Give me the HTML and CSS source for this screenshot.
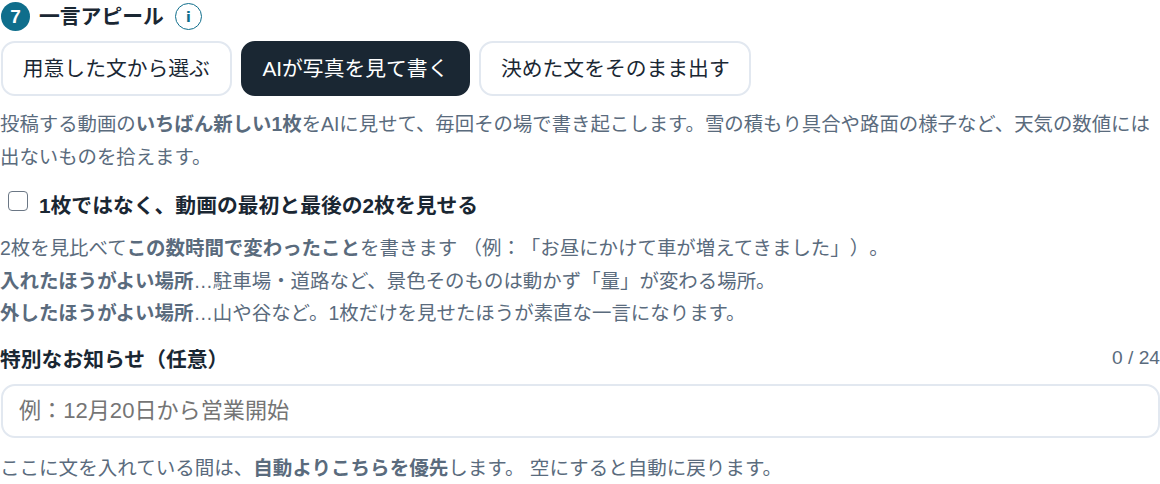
FILE: index.html
```html
<!DOCTYPE html>
<html lang="ja">
<head>
  <meta charset="UTF-8">
  <title>一言アピール</title>
  <link rel="stylesheet" href="styles.css">
</head>
<body>
  <section class="panel">
    <div class="heading">
      <span class="step">7</span>
      <h2>一言アピール</h2>
      <span class="info">i</span>
    </div>
    <div class="tabs">
      <button class="tab">用意した文から選ぶ</button>
      <button class="tab active">AIが写真を見て書く</button>
      <button class="tab">決めた文をそのまま出す</button>
    </div>
    <p class="note lead">投稿する動画の<b>いちばん新しい1枚</b>をAIに見せて、毎回その場で書き起こします。雪の積もり具合や路面の様子など、天気の数値には出ないものを拾えます。</p>
    <label class="check">
      <input type="checkbox">
      <span>1枚ではなく、動画の最初と最後の2枚を見せる</span>
    </label>
    <p class="note detail">2枚を見比べて<b>この数時間で変わったこと</b>を書きます （例：「お昼にかけて車が増えてきました」）。<br>
    <b>入れたほうがよい場所</b>…駐車場・道路など、景色そのものは動かず「量」が変わる場所。<br>
    <b>外したほうがよい場所</b>…山や谷など。1枚だけを見せたほうが素直な一言になります。</p>
    <div class="field-head">
      <label class="field-label" for="special">特別なお知らせ（任意）</label>
      <span class="count">0 / 24</span>
    </div>
    <input class="text-input" id="special" type="text" placeholder="例：12月20日から営業開始">
    <p class="note hint">ここに文を入れている間は、<b>自動よりこちらを優先</b>します。 空にすると自動に戻ります。</p>
  </section>
</body>
</html>
```
FILE: styles.css
```css
* {
  box-sizing: border-box;
  margin: 0;
  padding: 0;
}

body {
  background: #fff;
  font-family: "Liberation Sans", "Noto Sans CJK JP", sans-serif;
  color: #1a2733;
  text-spacing-trim: space-all;
  text-autospace: no-autospace;
}

.panel {
  width: 1160px;
  height: 484px;
  overflow: hidden;
  padding-top: 2px;
}

.heading {
  display: flex;
  align-items: center;
  height: 29px;
  margin-left: 1px;
}

.step {
  width: 29px;
  height: 29px;
  border-radius: 50%;
  background: #0f6e8c;
  color: #fff;
  font-size: 19px;
  font-weight: bold;
  display: flex;
  align-items: center;
  justify-content: center;
}

.heading h2 {
  font-size: 20.8px;
  font-weight: bold;
  margin-left: 9px;
  padding-bottom: 3px;
}

.info {
  width: 27px;
  height: 27px;
  margin-left: 11px;
  border: 1.5px solid #0f6e8c;
  border-radius: 50%;
  color: #0f6e8c;
  font-family: "DejaVu Sans", sans-serif;
  font-size: 14px;
  font-weight: bold;
  display: flex;
  align-items: center;
  justify-content: center;
}

.tabs {
  display: flex;
  gap: 9px;
  margin: 10px 0 0 1px;
}

.tab {
  height: 55px;
  padding: 0 19.75px 3px;
  border: 2px solid #e2e8f0;
  border-radius: 14px;
  background: #fff;
  color: #1a2733;
  font-family: inherit;
  font-size: 20.8px;
}

.tab.active {
  background: #1a2733;
  border-color: #1a2733;
  color: #fff;
}

.note {
  font-size: 19.45px;
  line-height: 32.6px;
  color: #5a6b7d;
}

.lead {
  margin-top: 12px;
  font-size: 19.4px;
}

.check {
  display: flex;
  align-items: center;
  margin: 16px 0 0 8px;
  font-size: 20.8px;
  font-weight: bold;
}

.check input {
  appearance: none;
  width: 20px;
  height: 20px;
  border: 1.5px solid #6b7785;
  border-radius: 4px;
  margin-right: 11px;
  position: relative;
  top: -3px;
}

.detail {
  margin-top: 13px;
}

.field-head {
  display: flex;
  justify-content: space-between;
  align-items: center;
  margin-top: 13px;
}

.field-label {
  font-size: 20.8px;
  font-weight: bold;
}

.count {
  font-size: 19.2px;
  color: #5a6b7d;
}

.text-input {
  display: block;
  width: 1159px;
  height: 54px;
  margin: 11px 0 0 1px;
  padding: 0 16px;
  border: 2px solid #e2e8f0;
  border-radius: 14px;
  font-family: inherit;
  font-size: 22.1px;
}

.text-input::placeholder {
  color: #757575;
}

.hint {
  margin-top: 14px;
  font-size: 19.55px;
}
```
